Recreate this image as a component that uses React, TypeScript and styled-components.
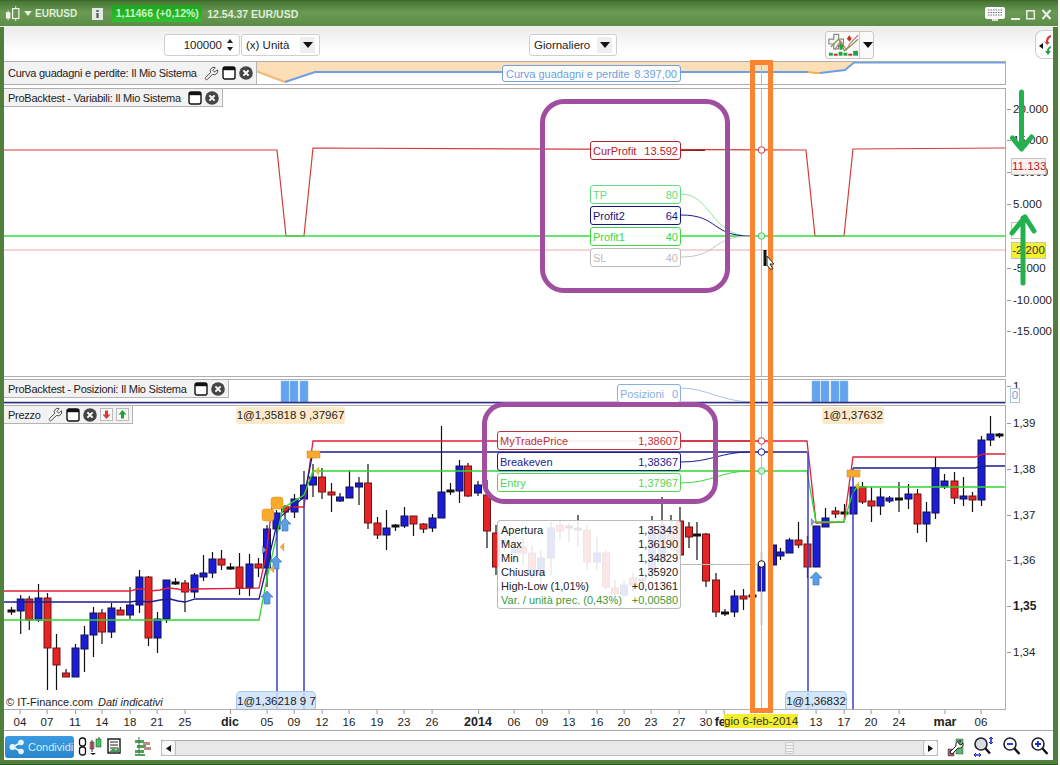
import React from "react";
import styled, { createGlobalStyle } from "styled-components";
import { Wrench } from "lucide-react";

const Global = createGlobalStyle`
  html, body { margin: 0; padding: 0; background: #fff; }
  body { font-family: "Liberation Sans", Arial, sans-serif; }
  #root { width: 1060px; height: 765px; overflow: hidden; }
`;

const Win = styled.div`
  position: relative; box-sizing: border-box; width: 1058px; height: 765px;
  background: #4f7f3a; padding: 0 5px 4px 4px; display: flex; flex-direction: column;
  border-bottom: 1px solid #2f5a1e; overflow: hidden; font-size: 11px; color: #222;
`;
const TitleBar = styled.div`
  height: 27px; flex: none; margin: 0 -5px 0 -4px; padding: 0 5px 0 4px; display: flex; align-items: center;
  background: linear-gradient(#477433, #6a9a54 45%, #5d8c48); border-top: 1px solid #3d6a2b;
  border-bottom: 1px solid #eef3ea; box-sizing: border-box; color: #dfeeda; font-weight: bold; font-size: 10.5px;
`;
const TitleText = styled.span<{ $ml: number; $size?: number }>`
  margin-left: ${p => p.$ml}px; white-space: nowrap; font-size: ${p => p.$size ?? 10.5}px;
`;
const PriceChip = styled.span`
  margin-left: 9px; width: 90px; height: 17px; line-height: 17px; text-align: center;
  background: linear-gradient(#1fa51f, #2fc02f); color: #c9f5c0; white-space: nowrap;
`;
const Spacer = styled.div`flex: 1;`;
const Content = styled.div`
  flex: 1; min-height: 0; background: #fff; display: flex; flex-direction: column;
`;
const Toolbar = styled.div`
  position: relative; height: 34px; flex: none; display: flex; align-items: center; padding-top: 1px; box-sizing: border-box;
  background: linear-gradient(#ececec, #ffffff 75%);
`;
const Field = styled.div<{ $w: number; $ml: number }>`
  box-sizing: border-box; width: ${p => p.$w}px; margin-left: ${p => p.$ml}px; height: 22px; display: flex; align-items: center;
  background: #fff; border: 1px solid #cfcfcf; border-radius: 3px; font-size: 11.5px; color: #222; padding: 0 4px;
  white-space: nowrap;
`;
const FieldGrow = styled.span<{ $right?: boolean }>`
  flex: 1; text-align: ${p => (p.$right ? "right" : "left")};
`;
const Spin = styled.svg`width: 10px; height: 16px; margin-left: 3px;`;
const DropBox = styled.span`
  width: 15px; height: 16px; background: #eee; display: flex; align-items: center; justify-content: center;
`;
const ChartBtn = styled.div`
  margin-left: 208px; width: 49px; height: 28px; box-sizing: border-box; border: 1px solid #c8c8c8; border-radius: 3px;
  background: #fafafa; display: flex; align-items: center;
`;
const SideTab = styled.div`
  position: absolute; right: 0; top: 3px; width: 18px; height: 29px; box-sizing: border-box;
  border: 1px solid #ccc; border-right: none; border-radius: 8px 0 0 8px; background: #fff;
`;
const PanelRow = styled.div<{ $h: number; $mt: number }>`
  height: ${p => p.$h}px; margin-top: ${p => p.$mt}px; flex: none; display: flex;
`;
const Plot = styled.div`
  position: relative; width: 1002px; box-sizing: border-box; height: 100%;
  border-top: 1px solid #aeaeae; border-bottom: 1px solid #aeaeae; border-right: 1px solid #aeaeae; overflow: hidden;
`;
const ChartSvg = styled.svg`display: block; position: absolute; left: 0; top: 0;`;
const PanelTitle = styled.div`
  position: absolute; left: 0; top: 0; box-sizing: border-box; height: 18px; display: flex; align-items: center; gap: 3px;
  padding: 0 3px 0 4px; background: #f2f2f2; border-right: 1px solid #b5b5b5; border-bottom: 1px solid #b5b5b5;
  font-size: 11px; letter-spacing: -0.25px; color: #222; white-space: nowrap;
  & > span { margin-right: 4px; }
`;
const AxisCol = styled.div`position: relative; flex: 1;`;
const AxisTick = styled.div<{ $y: number; $bold?: boolean }>`
  position: absolute; left: 7px; top: ${p => p.$y - 7}px; height: 14px; line-height: 14px; font-size: ${p => (p.$bold ? 12 : 11.5)}px;
  font-weight: ${p => (p.$bold ? "bold" : "normal")}; color: #222; white-space: nowrap;
  &::before { content: ""; position: absolute; left: -6px; top: 7px; width: 4px; height: 1px; background: #999; }
`;
const ValueTag = styled.div<{ $y: number; $bg: string; $fg: string; $x?: number; $w?: number }>`
  position: absolute; left: ${p => p.$x ?? 5}px; top: ${p => p.$y}px; box-sizing: border-box; width: ${p => p.$w ?? 35}px; height: 17px;
  line-height: 15px; text-align: center; font-size: 11.5px; background: ${p => p.$bg}; color: ${p => p.$fg}; border: 1px solid #c4c4c4;
`;
const Legend = styled.div<{ $x: number; $y: number; $w: number; $h: number; $c: string }>`
  position: absolute; left: ${p => p.$x}px; top: ${p => p.$y}px; width: ${p => p.$w}px; height: ${p => p.$h}px; box-sizing: border-box;
  border: 1px solid ${p => p.$c}; border-radius: 3px; background: rgba(255, 255, 255, 0.92); color: ${p => p.$c};
  display: flex; justify-content: space-between; align-items: center; padding: 0 2px; font-size: 11px; white-space: nowrap;
`;
const OrderTag = styled.div<{ $x: number; $w: number; $bottom?: boolean }>`
  position: absolute; left: ${p => p.$x}px; width: ${p => p.$w}px; box-sizing: border-box; font-size: 11.5px; text-align: center; white-space: nowrap;
  color: #222; 
  ${p => p.$bottom
    ? `bottom: 0; height: 18px; line-height: 18px; background: rgba(205,226,248,.85); border: 1px solid #a6c8ec; border-bottom: none; border-radius: 5px 5px 0 0;`
    : `top: 1px; height: 17px; line-height: 17px; background: #fdeacb; border-radius: 3px;`}
`;
const Copyright = styled.div`
  position: absolute; left: 2px; bottom: 1px; font-size: 11px; color: #222; white-space: nowrap;
  & i { margin-left: 5px; }
`;
const DataBox = styled.div`
  position: absolute; left: 493px; top: 114px; width: 184px; height: 89px; box-sizing: border-box; padding: 2px 2px 0 3px;
  border: 1px solid #bbb; border-radius: 3px; background: rgba(255, 255, 255, 0.89); font-size: 11px; line-height: 14px;
`;
const DataRow = styled.div<{ $green?: boolean }>`
  display: flex; justify-content: space-between; white-space: nowrap; color: ${p => (p.$green ? "#3c9a3c" : "#222")};
`;
const TimeAxis = styled.div`
  position: relative; height: 21px; width: 1049px; flex: none; box-sizing: border-box; border-bottom: 1px solid #a8a8a8;
`;
const TimeLabel = styled.span<{ $x: number; $bold?: boolean }>`
  position: absolute; left: ${p => p.$x - 4}px; top: 5px; transform: translateX(-50%); font-size: ${p => (p.$bold ? 12.5 : 11.5)}px;
  font-weight: ${p => (p.$bold ? "bold" : "normal")}; color: #222; line-height: 14px;
  &::before { content: ""; position: absolute; left: 50%; top: -5px; width: 1px; height: 4px; background: #999; }
`;
const CursorDate = styled.div`
  position: absolute; left: 720px; top: 4px; width: 74px; height: 14px; line-height: 14px; background: #f4ee2e; text-align: center;
  font-size: 11.5px; color: #333; white-space: nowrap;
`;
const BottomBar = styled.div`
  flex: 1; display: flex; align-items: flex-start; padding: 5px 0 0 1px; position: relative;
`;
const ShareBtn = styled.div`
  width: 69px; height: 22px; background: linear-gradient(#3b9be0, #2a86cc); border-radius: 3px; color: #d3ecff; font-size: 11px;
  display: flex; align-items: center; gap: 3px; padding-left: 4px; box-sizing: border-box; white-space: nowrap;
`;
const BarIcon = styled.svg<{ $ml: number; $w: number }>`
  margin-left: ${p => p.$ml}px; width: ${p => p.$w}px; height: 22px; flex: none;
`;
const Track = styled.div`
  width: 777px; height: 16px; margin: 4px 0 0 10px; box-sizing: border-box; flex: none; position: relative;
  background: #e8e8e8; border-top: 1px solid #aaa; border-bottom: 1px solid #bbb; display: flex; justify-content: space-between;
`;
const TrackBtn = styled.div`
  width: 15px; height: 16px; margin-top: -1px; box-sizing: border-box; background: #fafafa; border: 1px solid #bbb; border-radius: 3px;
  display: flex; align-items: center; justify-content: center;
`;
const TrackThumb = styled.div`
  position: absolute; left: 624px; top: 1px; width: 9px; height: 12px; box-sizing: border-box; border: 1px solid #ccc; background: repeating-linear-gradient(#f4f4f4 0 2px, #ccc 2px 3px);
`;
const Frame = styled.div<{ $x: number; $y: number; $w: number; $h: number; $c: string; $r: number }>`
  position: absolute; left: ${p => p.$x}px; top: ${p => p.$y}px; width: ${p => p.$w}px; height: ${p => p.$h}px; box-sizing: border-box;
  border: 5px solid ${p => p.$c}; border-radius: ${p => p.$r}px; pointer-events: none;
`;
const ArrowsOverlay = styled.svg`position: absolute; left: 1006px; top: 85px; width: 47px; height: 205px;`;
const CursorMark = styled.svg`position: absolute; left: 763px; top: 248px; width: 16px; height: 22px;`;

type C = [number, number, number, number, number, "b" | "r" | "k"];
const candles: C[] = [
  [11.5,607,615,610,612,"k"],[20.7,595,634,599,611,"b"],[29.3,596,630,599,620,"r"],[38.5,584,622,598,620,"b"],[47.5,593,690,598,648,"r"],
  [56.5,634,690,648,665,"r"],[66,669,677,673,677,"r"],[75.5,644,677,648,677,"b"],[84.5,626,672,635,649,"b"],[93.5,607,657,613,635,"b"],
  [102,609,644,613,632,"r"],[111.5,603,638,608,632,"b"],[120.5,607,615,610,615,"r"],[130,587,619,605,615,"b"],[139.5,570,613,577,605,"b"],
  [148.5,576,646,577,638,"r"],[157.5,612,653,619,638,"b"],[166.5,580,623,580,619,"b"],[175.5,578,585,582,584,"k"],[185,580,612,583,592,"r"],
  [194.5,573,598,575,592,"b"],[203.5,555,581,573,577,"b"],[212.5,552,578,559,573,"b"],[221.5,550,570,559,565,"r"],[230.5,563,570,567,569,"k"],
  [239.5,553,595,567,588,"r"],[249.5,554,596,564,588,"b"],[258.5,558,577,564,568,"r"],[267,525,587,529,568,"b"],[276.5,510,540,513,529,"b"],
  [285,505,522,507,512,"r"],[294.5,494,518,499,512,"b"],[304,471,499,485,499,"b"],[313,464,497,477,485,"b"],[322,468,499,477,492,"r"],
  [331.5,483,512,492,495,"r"],[340,493,502,497,501,"b"],[349.5,470,498,487,498,"b"],[359,477,505,483,487,"b"],[368,464,529,483,523,"r"],
  [377.5,517,539,523,535,"r"],[386.5,510,550,528,535,"b"],[395.5,524,531,525,527,"k"],[404.5,507,528,516,526,"b"],[413.5,516,536,516,524,"r"],
  [423.5,523,533,524,529,"r"],[432.5,514,532,518,528,"b"],[441.5,426,518,492,518,"b"],[450.5,483,495,490,492,"k"],[459.5,460,503,466,491,"b"],
  [468,463,497,466,496,"r"],[478,481,496,485,493,"b"],[487,480,548,495,531,"r"],[496,525,575,533,567,"r"],[505,535,552,541,544,"k"],
  [515,535,560,547,553,"b"],[523,538,565,547,553,"r"],[532,545,578,553,570,"r"],[541,550,585,558,575,"b"],[551,522,575,528,558,"b"],
  [560,520,540,525,531,"r"],[569,523,543,526,528,"k"],[578,515,547,528,530,"k"],[587,525,570,530,562,"r"],[597,537,570,553,562,"b"],
  [606,550,590,553,587,"r"],[615,580,597,588,594,"r"],[624,580,597,585,595,"b"],[633,572,592,578,585,"r"],[642,572,590,579,581,"k"],
  [652,516,578,527,573,"b"],[662,497,570,525,560,"b"],[671,515,550,528,540,"r"],[680,507,560,521,555,"r"],[689,522,548,527,537,"r"],
  [697,522,560,534,536,"k"],[706,533,587,534,581,"r"],[716,573,617,580,612,"r"],[725,609,616,612,614,"k"],[734.5,590,617,596,612,"b"],
  [743.5,589,610,596,599,"r"],[752.5,591,600,595,597,"k"],[761.5,552,625,564,591,"b"],[773,545,565,545,565,"b"],[780.5,548,560,552,556,"b"],
  [789.5,538,553,540,553,"b"],[798.5,522,548,540,545,"r"],[807.5,536,578,544,567,"r"],[816.5,526,567,526,567,"b"],[825.5,508,527,518,527,"b"],
  [835.5,507,518,511,514,"r"],[844.5,504,520,512,514,"k"],[853.5,487,514,487,514,"b"],[862.5,482,504,487,502,"r"],[871.5,487,522,501,506,"r"],
  [880.5,488,515,497,506,"b"],[889.5,496,503,498,501,"b"],[899,482,512,498,500,"k"],[908.5,484,509,494,499,"b"],[917.5,489,533,494,524,"r"],
  [926.5,502,542,512,524,"b"],[935.5,457,519,468,513,"b"],[944.5,474,489,481,487,"b"],[954.5,472,504,481,498,"r"],[963.5,477,506,496,499,"b"],
  [972.5,492,512,496,500,"r"],[981.5,436,506,440,500,"b"],[990.5,416,446,434,440,"b"],[999.5,433,438,434,436,"k"],
];
const bodyFill = { b: "#1c1cd6", r: "#e52525", k: "#111" };
const bodyEdge = { b: "#12124e", r: "#701414", k: "#111" };

const Candle = ({ c }: { c: C }) => {
  const [x, hi, lo, top, bot, k] = c;
  return (
    <g>
      <line x1={x} x2={x} y1={hi} y2={lo} stroke="#111" strokeWidth={1.2} />
      <rect x={x - 3.5} y={top} width={7} height={bot - top} fill={bodyFill[k]} stroke={bodyEdge[k]} strokeWidth={1} />
    </g>
  );
};

const Arrow = ({ x, y }: { x: number; y: number }) => (
  <path d={`M${x} ${y}l6 6h-3v7h-6v-7h-3z`} fill="#5b9ee6" stroke="#3c7cc8" strokeWidth={0.7} />
);
const Tri = ({ x, y, c, dir }: { x: number; y: number; c: string; dir: 1 | -1 }) => (
  <path d={`M${x} ${y}l${4 * dir} -4v8z`} fill={c} stroke="#b08a20" strokeWidth={0.3} />
);
const Dot = ({ y, c, f = "#fff" }: { y: number; c: string; f?: string }) => (
  <circle cx={761.5} cy={y} r={3.3} fill={f} stroke={c} strokeWidth={1} />
);

const pts = (a: number[][]) => a.map(p => p.join(",")).join(" ");
const redLine = [[4,591],[130,591],[137,589],[143,589],[150,591],[160,590],[168,588],[178,589],[185,591],[193,589],[259,588],[266,555],[272,507],[304,507],[313,441],[807,441],[816,523],[844,522],[853,457],[975,457],[984,454],[1005,454]];
const navyLine = [[4,602],[130,602],[137,601],[150,602],[160,600],[170,599],[178,601],[185,602],[195,599],[259,599],[266,570],[278,519],[304,497],[313,452],[807,452]];
const navyLine2 = [[853,468],[975,468],[984,466],[1005,466]];
const greenLine = [[4,620],[259,620],[267,578],[283,508],[304,495],[313,471],[807,471],[816,522],[844,522],[853,492],[857,487],[1005,487]];

const WinIcon = () => (
  <svg width="14" height="14" viewBox="0 0 14 14"><rect x="1" y="1" width="12" height="12" rx="2" fill="#fff" stroke="#111" strokeWidth="1.4" /><rect x="1" y="1" width="12" height="3.2" fill="#111" /></svg>
);
const CloseIcon = () => (
  <svg width="14" height="14" viewBox="0 0 14 14"><circle cx="7" cy="7" r="6.8" fill="#454545" /><path d="M4.4 4.4l5.2 5.2M9.6 4.4l-5.2 5.2" stroke="#fff" strokeWidth="2" /></svg>
);
const WrenchIcon = () => <Wrench size={15} strokeWidth={1.4} color="#333" />;
const DocIcon = ({ c, up }: { c: string; up?: boolean }) => (
  <svg width="13" height="13" viewBox="0 0 13 13">
    <rect x="0.5" y="0.5" width="12" height="12" fill="#fafafa" stroke="#bbb" />
    <path d={up ? "M6.5 2l4 4.5H8v4H5v-4H2.5z" : "M6.5 11l4-4.5H8v-4H5v4H2.5z"} fill={c} />
  </svg>
);
const TriDown = () => <svg width="10" height="6" viewBox="0 0 10 6"><path d="M0 0h10L5 6z" fill="#111" /></svg>;

const Dec = ({ l, r, y, x, w, c, h = 19 }: { l: string; r: string; y: number; x: number; w: number; c: string; h?: number }) => (
  <Legend $x={x} $y={y} $w={w} $h={h} $c={c}><span>{l}</span><span>{r}</span></Legend>
);

const axisLabels2 = [["20.000",21],["15.000",52],["10.000",84],["5.000",116],["-5.000",180],["-10.000",212],["-15.000",243]] as const;
const priceAxis = [["1,39",18],["1,38",64],["1,37",110],["1,36",155],["1,35",201,true],["1,34",247]] as const;
const timeLabels: [string, number, boolean?][] = [["04",20],["07",47],["11",75],["14",102],["18",130],["21",157],["25",185],["dic",230,true],["05",267],["09",294],["12",322],["16",349],["19",377],["23",404],["26",432],["2014",478,true],["06",514],["09",542],["13",569],["16",597],["20",624],["23",651],["27",679],["30",706],["feb",724,true],["13",816],["17",844],["20",871],["24",899],["mar",945,true],["06",981]];

export default function App() {
  return (
    <>
      <Global />
      <Win>
        <TitleBar>
          <svg width="17" height="18" viewBox="0 0 19 18" style={{ marginLeft: 1 }}><rect x="1" y="7" width="5" height="7" fill="#eef5ea" /><path d="M3.5 5v11" stroke="#eef5ea" /><rect x="8.5" y="3" width="7" height="11" fill="none" stroke="#eef5ea" strokeWidth="1.4" /><path d="M12 0v3M12 14v3" stroke="#eef5ea" /></svg>
          <svg width="8" height="5" viewBox="0 0 9 6" style={{ marginLeft: 2 }}><path d="M0 0h9L4.5 6z" fill="#e6f0e0" /></svg>
          <TitleText $ml={3} $size={10}>EURUSD</TitleText>
          <svg width="11" height="12" viewBox="0 0 11 12" style={{ marginLeft: 15 }}><rect width="11" height="12" fill="#e4e9e1" /><rect x="4.4" y="2" width="2.2" height="2" fill="#556" /><rect x="4.4" y="5" width="2.2" height="5" fill="#556" /></svg>
          <PriceChip>1,11466 (+0,12%)</PriceChip>
          <TitleText $ml={5}>12.54.37 EUR/USD</TitleText>
          <Spacer />
          <svg width="20" height="14" viewBox="0 0 20 14" style={{ marginRight: 2 }}><rect width="20" height="12" rx="2" fill="#fff" /><path d="M3 3h14M3 5.5h14M3 8h14" stroke="#666" strokeDasharray="1.5 1" /><path d="M7 13h6" stroke="#fff" strokeWidth="1.5" /></svg>
          <svg width="46" height="14" viewBox="0 0 46 14"><path d="M4 12h9" stroke="#e9f1e5" strokeWidth="2" /><rect x="19.8" y="3.8" width="7.5" height="8" fill="none" stroke="#e9f1e5" strokeWidth="1.5" /><path d="M35.5 3l8 9M43.5 3l-8 9" stroke="#e9f1e5" strokeWidth="2" /></svg>
        </TitleBar>
        <Content>
          <Toolbar>
            <Field $w={76} $ml={160}>
              <FieldGrow $right>100000</FieldGrow>
              <Spin viewBox="0 0 10 16"><path d="M5 2l3 4H2zM5 14l3-4H2z" fill="#222" /></Spin>
            </Field>
            <Field $w={79} $ml={1}>
              <FieldGrow>(x) Unità</FieldGrow>
              <DropBox><TriDown /></DropBox>
            </Field>
            <Field $w={88} $ml={209}>
              <FieldGrow>Giornaliero</FieldGrow>
              <DropBox><TriDown /></DropBox>
            </Field>
            <ChartBtn>
              <svg width="34" height="26" viewBox="0 0 34 26" style={{ borderRight: "1px solid #ccc" }}>
                <path d="M3 7h5V2h5v5h5v5h-5v5H8v-5H3z" fill="#f4f4f4" stroke="#8a8a8a" strokeWidth="1.2" />
                <path d="M9 18l6-9 6 9 4-7 8-8" fill="none" stroke="#d07a7a" strokeWidth="1.3" />
                <path d="M5 15l8-8 6 12 5-4 9-8" fill="none" stroke="#7f9a50" strokeWidth="1.3" />
                <path d="M24 3l2.5 3.5-2.5 3-2.5-3z" fill="#c82c2c" />
                <path d="M12 15l3.5-3.5L19 15h-2v3h-3v-3z" fill="#1fa542" />
                <rect x="3" y="21" width="4" height="3" fill="#1fa542" /><rect x="8" y="22" width="4" height="2" fill="#c82c2c" /><rect x="13" y="20" width="4" height="4" fill="#1fa542" /><rect x="18" y="21" width="4" height="3" fill="#1fa542" /><rect x="23" y="22" width="4" height="2" fill="#c82c2c" /><rect x="28" y="19" width="5" height="5" fill="#1fa542" />
              </svg>
              <span style={{ display: "flex", marginLeft: 3 }}><TriDown /></span>
            </ChartBtn>
            <SideTab>
              <svg width="17" height="27" viewBox="0 0 17 27">
                <path d="M7 12L3 15l4 3z" fill="#111" />
                <path d="M15 4c-4 1-5 4-5 7l-2-1 3 4 3-3-2 0c0-2 1-4 3-5z" fill="#d03c3c" />
                <path d="M15 15c-3 1-4 3-4 5h-2l3 4 3-4h-2c0-2 1-3 2-3z" fill="#2a9a4a" />
              </svg>
            </SideTab>
          </Toolbar>

          <PanelRow $h={24} $mt={0}>
            <Plot>
              <ChartSvg width={1001} height={22} viewBox="4 62 1001 22">
                <polygon points={pts([[253,62],[253,70],[285,82],[315,72],[808,72],[815,73],[845,70],[854,62]])} fill="#fcdfb6" />
                <polyline points={pts([[253,70],[285,82]])} fill="none" stroke="#f2b878" strokeWidth={2} />
                <polyline points={pts([[285,82],[315,72],[808,72]])} fill="none" stroke="#6d9fe4" strokeWidth={2} />
                <polyline points={pts([[808,72],[815,73],[820,73]])} fill="none" stroke="#f2b04a" strokeWidth={2} />
                <polyline points={pts([[820,73],[845,70],[854,62.5],[1005,62.5]])} fill="none" stroke="#6d9fe4" strokeWidth={2} />
                <line x1={761.5} x2={761.5} y1={62} y2={84} stroke="#e8a8b0" />
              </ChartSvg>
              <PanelTitle style={{ height: 23 }}>
                <span>Curva guadagni e perdite: Il Mio Sistema</span>
                <WrenchIcon /><WinIcon /><CloseIcon />
              </PanelTitle>
              <Legend $x={498} $y={3} $w={179} $h={17} $c="#6f9fe0" style={{ padding: "0 3px" }}>
                <span>Curva guadagni e perdite</span><span>8.397,00</span>
              </Legend>
            </Plot>
          </PanelRow>

          <PanelRow $h={289} $mt={3}>
            <Plot>
              <ChartSvg width={1001} height={287} viewBox="4 89 1001 287">
                <polyline points={pts([[4,150],[277,150],[286,236],[304,236],[313,148],[806,150],[815,236],[844,236],[853,149],[1005,148]])} fill="none" stroke="#d83a3a" strokeWidth={1.2} />
                <polyline points={pts([[4,250],[1005,250]])} fill="none" stroke="#f0a8a8" strokeWidth={1.2} />
                <polyline points={pts([[4,236],[1005,236]])} fill="none" stroke="#2fe03f" strokeWidth={1.3} />
                <line x1={761.5} x2={761.5} y1={89} y2={376} stroke="#e8a8b0" />
                <path d="M681 150.5c10 0 20-1.4 24 0h-24z" fill="#902020" stroke="#902020" />
                <path d="M681 194c30 0 30 42 69 42" fill="none" stroke="#8ee7a0" />
                <path d="M681 215c38 0 30 21 69 21" fill="none" stroke="#1a1a90" />
                <path d="M681 257c38 0 30-21 69-21" fill="none" stroke="#c4c4c4" />
                <Dot y={150} c="#d03040" />
                <Dot y={236} c="#59c16e" f="#c8f2d0" />
              </ChartSvg>
              <PanelTitle>
                <span>ProBacktest - Variabili: Il Mio Sistema</span>
                <WinIcon /><CloseIcon />
              </PanelTitle>
              <Dec l="CurProfit" r="13.592" x={586} y={52} w={91} c="#b5202a" />
              <Dec l="TP" r="80" x={586} y={96} w={91} c="#5fdd7e" />
              <Dec l="Profit2" r="64" x={586} y={117} w={91} c="#14147e" />
              <Dec l="Profit1" r="40" x={586} y={138} w={91} c="#3fd83f" />
              <Dec l="SL" r="40" x={586} y={159} w={91} c="#bdbdbd" />
            </Plot>
            <AxisCol>
              {axisLabels2.map(([t, y]) => <AxisTick key={t} $y={y}>{t}</AxisTick>)}
              <ValueTag $y={70} $bg="#fdf0f0" $fg="#b5202a">11.133</ValueTag>
              <ValueTag $y={134} $bg="#fff" $fg="#fff" $w={12}></ValueTag>
              <ValueTag $y={154} $bg="#f4f030" $fg="#333">-2.200</ValueTag>
            </AxisCol>
          </PanelRow>

          <PanelRow $h={25} $mt={2}>
            <Plot>
              <ChartSvg width={1001} height={23} viewBox="4 380 1001 23">
                {[281, 290, 300, 812, 821, 831, 840].map(x => (
                  <rect key={x} x={x} y={381} width={8} height={21} fill="#64a4ee" stroke="#8ab8ee" strokeWidth={0.5} />
                ))}
                <path d="M681 388c24 0 40 13 69 14" fill="none" stroke="#a9c4ec" />
                <line x1={761.5} x2={761.5} y1={380} y2={402} stroke="#e8a8b0" />
                <line x1={4} x2={1005} y1={402.5} y2={402.5} stroke="#2a2a9a" strokeWidth={1.5} />
              </ChartSvg>
              <PanelTitle>
                <span>ProBacktest - Posizioni: Il Mio Sistema</span>
                <WinIcon /><CloseIcon />
              </PanelTitle>
              <Legend $x={613} $y={4} $w={64} $h={19} $c="#88aee4"><span>Posizioni</span><span>0</span></Legend>
            </Plot>
            <AxisCol>
              <AxisTick $y={7}>1</AxisTick>
              <ValueTag $y={9} $x={4} $w={10} $bg="#fff" $fg="#7aa0d0" style={{ height: 15, lineHeight: "13px", borderColor: "#a8c4e4" }}>0</ValueTag>
            </AxisCol>
          </PanelRow>

          <PanelRow $h={305} $mt={1}>
            <Plot>
              <ChartSvg width={1001} height={303} viewBox="4 406 1001 303">
                {candles.map((c, i) => <Candle key={i} c={c} />)}
                <polyline points={pts(redLine)} fill="none" stroke="#e0203a" strokeWidth={1.3} />
                <polyline points={pts(navyLine)} fill="none" stroke="#1c1c96" strokeWidth={1.3} />
                <polyline points={pts(navyLine2)} fill="none" stroke="#1c1c96" strokeWidth={1.3} />
                <polyline points={pts(greenLine)} fill="none" stroke="#2fd82f" strokeWidth={1.3} />
                <path d="M277 530V709M304 500V709M808 452V709M853 468V709" fill="none" stroke="#3c3cd0" strokeWidth={1.5} />
                <line x1={761.5} x2={761.5} y1={406} y2={709} stroke="#e8a8b0" />
                <path d="M681 441h69" stroke="#c02030" />
                <path d="M681 462c30 0 40-10 69-10" fill="none" stroke="#1a1a9a" />
                <path d="M681 483c30 0 40-12 69-12" fill="none" stroke="#3fd83f" />
                <line x1={680} x2={761} y1={564.5} y2={564.5} stroke="#bbb" />
                <rect x={262} y={509} width={12} height={12} rx={3} fill="#f7aa2c" stroke="#e08a18" strokeWidth={0.5} />
                <rect x={271} y={497} width={12} height={12} rx={3} fill="#f7aa2c" stroke="#e08a18" strokeWidth={0.5} />
                <rect x={307} y={451} width={13} height={7} fill="#f7aa2c" stroke="#c88a20" strokeWidth={0.5} />
                <rect x={847} y={470} width={13} height={7} fill="#f7aa2c" stroke="#c88a20" strokeWidth={0.5} />
                <Arrow x={267} y={591} /><Arrow x={285} y={518} /><Arrow x={276} y={556} /><Arrow x={816} y={572} />
                <Tri x={280} y={547} c="#eeb030" dir={1} /><Tri x={270} y={569} c="#eeb030" dir={1} /><Tri x={315} y={471} c="#d8c030" dir={1} /><Tri x={855} y={486} c="#d8c030" dir={1} />
                <Tri x={266} y={550} c="#6aa4e4" dir={-1} /><Tri x={815} y={522} c="#6aa4e4" dir={-1} />
                <Dot y={441} c="#d03040" /><Dot y={452} c="#20209a" /><Dot y={471} c="#59c16e" f="#c8f2d0" /><Dot y={564} c="#111" />
              </ChartSvg>
              <PanelTitle>
                <span>Prezzo</span>
                <WrenchIcon /><WinIcon /><CloseIcon />
                <DocIcon c="#d83a3a" /><DocIcon c="#22a040" up />
              </PanelTitle>
              <OrderTag $x={232} $w={109}>1@1,35818 9 ,37967</OrderTag>
              <OrderTag $x={818} $w={62}>1@1,37632</OrderTag>
              <OrderTag $x={232} $w={80} $bottom>1@1,36218 9 7</OrderTag>
              <OrderTag $x={781} $w={62} $bottom>1@1,36832</OrderTag>
              <Copyright>© IT-Finance.com<i>Dati indicativi</i></Copyright>
              <Dec l="MyTradePrice" r="1,38607" x={493} y={25} w={184} c="#c4303a" />
              <Dec l="Breakeven" r="1,38367" x={493} y={46} w={184} c="#1c1c90" />
              <Dec l="Entry" r="1,37967" x={493} y={67} w={184} c="#52d452" />
              <DataBox>
                <DataRow><span>Apertura</span><span>1,35343</span></DataRow>
                <DataRow><span>Max</span><span>1,36190</span></DataRow>
                <DataRow><span>Min</span><span>1,34829</span></DataRow>
                <DataRow><span>Chiusura</span><span>1,35920</span></DataRow>
                <DataRow><span>High-Low (1,01%)</span><span>+0,01361</span></DataRow>
                <DataRow $green><span>Var. / unità prec. (0,43%)</span><span>+0,00580</span></DataRow>
              </DataBox>
            </Plot>
            <AxisCol>
              {priceAxis.map(([t, y, b]) => <AxisTick key={t} $y={y} $bold={!!b}>{t}</AxisTick>)}
            </AxisCol>
          </PanelRow>

          <TimeAxis>
            {timeLabels.map(([t, x, b], i) => <TimeLabel key={i} $x={x} $bold={b}>{t}</TimeLabel>)}
            <CursorDate>gio 6-feb-2014</CursorDate>
          </TimeAxis>

          <BottomBar>
            <ShareBtn>
              <svg width="16" height="16" viewBox="0 0 16 16"><path d="M3.5 8L12 3.5M3.5 8l8.5 4.5" stroke="#e8f5ff" strokeWidth="1.6" /><circle cx="3.5" cy="8" r="3" fill="#e8f5ff" /><circle cx="12" cy="3.5" r="2.8" fill="#e8f5ff" /><circle cx="12" cy="12.5" r="2.8" fill="#e8f5ff" /></svg>
              Condividi
            </ShareBtn>
            <BarIcon $ml={4} $w={24} viewBox="0 0 24 22">
              <rect x="1.5" y="2" width="6" height="8" rx="2.5" fill="none" stroke="#111" strokeWidth="1.3" /><rect x="1.5" y="11" width="6" height="8" rx="2.5" fill="none" stroke="#111" strokeWidth="1.3" />
              <rect x="12" y="6" width="4" height="7" fill="#d97878" stroke="#333" strokeWidth=".5" /><path d="M14 4v12M21 1v10" stroke="#333" /><rect x="18" y="3" width="5" height="8" fill="#3fc65a" stroke="#333" strokeWidth=".5" /><path d="M12 17h6l-3 2z" fill="#111" />
            </BarIcon>
            <BarIcon $ml={5} $w={14} viewBox="0 0 14 22">
              <rect x="1" y="3" width="12" height="14" fill="#fff" stroke="#111" strokeWidth="1.4" /><path d="M3 6h8M3 9h8M3 12h8" stroke="#222" /><path d="M2 16l4-4 3 2 4-4v6z" fill="#4a9a5a" />
            </BarIcon>
            <BarIcon $ml={13} $w={17} viewBox="0 0 17 22">
              <path d="M1 4h9v3H1zM3 9h9v3H3zM1 14h9v3H1z" fill="#4fa05a" /><path d="M9 6h7v3H9zM10 11h7v3h-7z" fill="#b88a8a" /><path d="M5 1v19" stroke="#3a7a44" /><path d="M1 19h10" stroke="#4fa05a" strokeWidth="2" />
            </BarIcon>
            <Track>
              <TrackBtn><svg width="5" height="7" viewBox="0 0 5 7"><path d="M5 0v7L0 3.5z" fill="#111" /></svg></TrackBtn>
              <TrackThumb />
              <TrackBtn><svg width="5" height="7" viewBox="0 0 5 7"><path d="M0 0v7l5-3.5z" fill="#111" /></svg></TrackBtn>
            </Track>
            <BarIcon $ml={9} $w={18} viewBox="0 0 18 22">
              <path d="M1 13h6v7H1z" fill="#9a5a6a" stroke="#444" strokeWidth=".5" /><path d="M9 3h7v15H9z" fill="#58b868" stroke="#444" strokeWidth=".5" />
              <path d="M14 5a4 4 0 0 0-5 5l-6 6 2 2 6-6a4 4 0 0 0 5-5l-2 2-2-1-.5-1.5z" fill="#fff" stroke="#222" strokeWidth="1" />
            </BarIcon>
            <BarIcon $ml={8} $w={20} viewBox="0 0 20 22">
              <circle cx="8" cy="8" r="6" fill="#d9dde2" stroke="#223" strokeWidth="1.6" /><path d="M12.5 12.5l4.5 5" stroke="#111" strokeWidth="2.4" />
              <path d="M18 1v6M1 19h7" stroke="#1c2cc8" strokeWidth="1.6" /><path d="M16 3l2-2 2 2M16 6l2 2 2-2M3 17l-2 2 2 2M6 17l2 2-2 2" fill="none" stroke="#1c2cc8" />
            </BarIcon>
            <BarIcon $ml={9} $w={19} viewBox="0 0 19 22">
              <circle cx="8" cy="8" r="6" fill="#fff" stroke="#223" strokeWidth="1.6" /><path d="M12.5 12.5l5 5.5" stroke="#111" strokeWidth="2.4" /><path d="M5 8h6" stroke="#1c2cc8" strokeWidth="1.8" />
            </BarIcon>
            <BarIcon $ml={9} $w={19} viewBox="0 0 19 22">
              <circle cx="8" cy="8" r="6" fill="#fff" stroke="#223" strokeWidth="1.6" /><path d="M12.5 12.5l5 5.5" stroke="#111" strokeWidth="2.4" /><path d="M5 8h6M8 5v6" stroke="#1c2cc8" strokeWidth="1.8" />
            </BarIcon>
          </BottomBar>
        </Content>

        <Frame $x={750} $y={60} $w={23} $h={653} $c="#fb8430" $r={0} />
        <Frame $x={540} $y={99} $w={190} $h={194} $c="#a04fa0" $r={24} />
        <Frame $x={482} $y={402} $w={236} $h={102} $c="#a04fa0" $r={22} />
        <ArrowsOverlay viewBox="1006 85 47 205">
          <path d="M1021.5 92V148M1012.5 138l9 11 10-12" fill="none" stroke="#22b14c" strokeWidth="5" strokeLinecap="round" strokeLinejoin="round" />
          <path d="M1023 283V218M1012 233l13-16 9 14" fill="none" stroke="#22b14c" strokeWidth="5" strokeLinecap="round" strokeLinejoin="round" />
        </ArrowsOverlay>
        <CursorMark viewBox="0 0 16 22">
          <path d="M2 2v16" stroke="#111" strokeWidth="3" />
          <path d="M4 8l7 8-4 0 3 5-3 0-3-4z" fill="#fff" stroke="#333" strokeWidth="1" />
        </CursorMark>
      </Win>
    </>
  );
}
